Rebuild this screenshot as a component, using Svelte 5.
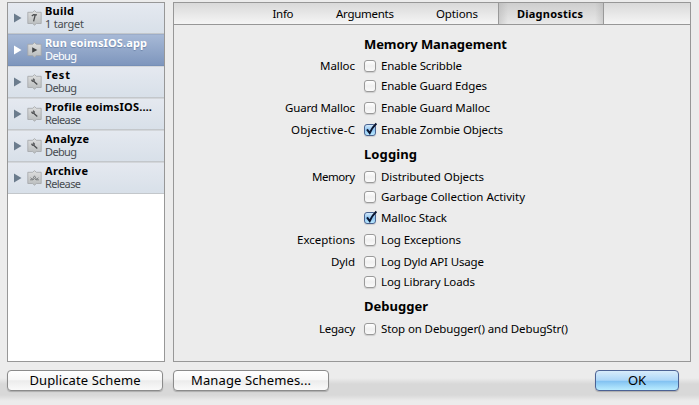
<script>
  const schemes = [
    { name: 'Build', detail: '1 target', icon: 'hammer', w: 29, dw: 39 },
    { name: 'Run eoimsIOS.app', detail: 'Debug', icon: 'play', w: 102, dw: 32, selected: true },
    { name: 'Test', detail: 'Debug', icon: 'wrench', w: 25, dw: 32 },
    { name: 'Profile eoimsIOS.…', detail: 'Release', icon: 'wrench', w: 107, dw: 36 },
    { name: 'Analyze', detail: 'Debug', icon: 'wrench', w: 44, dw: 32 },
    { name: 'Archive', detail: 'Release', icon: 'archive', w: 43, dw: 36 }
  ];
  const tabs = [
    { name: 'Info', w: 21, box: 74 },
    { name: 'Arguments', w: 58, box: 90 },
    { name: 'Options', w: 42, box: 94 },
    { name: 'Diagnostics', w: 66, box: 106, active: true }
  ];
  const groups = [
    { title: 'Memory Management', w: 143, rows: [
      { label: 'Malloc', lw: 35, text: 'Enable Scribble', w: 81, h: 20 },
      { text: 'Enable Guard Edges', w: 106, h: 22 },
      { label: 'Guard Malloc', lw: 70, text: 'Enable Guard Malloc', w: 109, h: 22 },
      { label: 'Objective-C', lw: 64, text: 'Enable Zombie Objects', w: 122, h: 22, on: true }
    ] },
    { title: 'Logging', w: 53, rows: [
      { label: 'Memory', lw: 43, text: 'Distributed Objects', w: 103, h: 20 },
      { text: 'Garbage Collection Activity', w: 144, h: 21 },
      { text: 'Malloc Stack', w: 66, h: 22, on: true },
      { label: 'Exceptions', lw: 58, text: 'Log Exceptions', w: 80, h: 22 },
      { label: 'Dyld', lw: 24, text: 'Log Dyld API Usage', w: 103, h: 20 },
      { text: 'Log Library Loads', w: 94, h: 22 }
    ] },
    { title: 'Debugger', w: 64, rows: [
      { label: 'Legacy', lw: 36, text: 'Stop on Debugger() and DebugStr()', w: 187, h: 20 }
    ] }
  ];

  // Tracks a label's letters so that the text spans the given width.
  function track(node, width) {
    const apply = () => {
      node.style.letterSpacing = '0px';
      const natural = node.getBoundingClientRect().width;
      const gap = (width - natural) / Math.max(1, node.textContent.length - 1);
      node.style.letterSpacing = `${gap}px`;
      node.style.marginRight = `${-gap}px`;
    };
    apply();
    document.fonts.ready.then(apply);
  }
</script>

<div class="sheet">
  <div class="content">
    <div class="sidebar">
      {#each schemes as s}
        <div class="scheme" class:selected={s.selected}>
          <svg class="arrow" width="8" height="10" viewBox="0 0 8 10"><path d="M0 .5 7.5 5 0 9.5Z" /></svg>
          <svg class="icon" width="15" height="16" viewBox="0 0 15 16">
            <defs>
              <linearGradient id="plate-{s.name.slice(0, 3)}" x2="0" y2="1"><stop stop-color="#dedfdf" /><stop offset="1" stop-color="#b9bcbd" /></linearGradient>
            </defs>
            <path class="plate" fill="url(#plate-{s.name.slice(0, 3)})" d="M.8 2.3H5.6L7.5.6l1.9 1.7h4.8v11.2H9.4l-1.9 1.7-1.9-1.7H.8Z" />
            {#if s.icon === 'hammer'}
              <path class="mark" d="M4.8 6 6.6 4.6l3.4.3M8.2 5 6.6 11.3" />
            {:else if s.icon === 'play'}
              <path class="solid" d="M5.2 5.2 10.3 8l-5.1 2.8Z" />
            {:else if s.icon === 'wrench'}
              <path class="mark" d="m6.4 7 3.9 3.6M4.6 5.6l.8 1.5 1.5.1.3-1.3-1-1.2" />
            {:else}
              <path class="fine" d="M3 9.8h2.2l2.3-4 2.3 4H12M3.6 7.6l1.8 2m6-2-1.8 2M5.7 10.2l1.8-1.7 1.8 1.7" />
            {/if}
          </svg>
          <div class="names">
            <div class="name"><span use:track={s.w}>{s.name}</span></div>
            <div class="detail"><span use:track={s.dw}>{s.detail}</span></div>
          </div>
        </div>
      {/each}
    </div>
    <div class="panel">
      <div class="tabs">
        {#each tabs as t}
          <div class="tab" class:active={t.active} style:width="{t.box}px"><span use:track={t.w}>{t.name}</span></div>
        {/each}
      </div>
      <div class="options">
        {#each groups as g}
          <div class="title"><span use:track={g.w}>{g.title}</span></div>
          {#each g.rows as r}
            <div class="row" style:height="{r.h}px">
              <div class="label">{#if r.label}<span use:track={r.lw}>{r.label}</span>{/if}</div>
              <div class="box" class:on={r.on}>
                {#if r.on}
                  <svg width="14" height="14" viewBox="0 0 14 14"><path d="m3 6.3 2.7 3.7Q8 4.5 12.4.4" /></svg>
                {/if}
              </div>
              <div class="text"><span use:track={r.w}>{r.text}</span></div>
            </div>
          {/each}
        {/each}
      </div>
    </div>
  </div>
  <div class="footer">
    <div class="button dup"><span use:track={111}>Duplicate Scheme</span></div>
    <div class="button manage"><span use:track={120}>Manage Schemes...</span></div>
    <div class="button ok"><span use:track={18}>OK</span></div>
  </div>
</div>

<style>
  .sheet {
    box-sizing: border-box;
    width: 699px;
    height: 405px;
    padding: 2px 8px 0 7px;
    overflow: hidden;
    background: linear-gradient(#ececec 378px, #d8d8d8 384px, #d8d8d8 395px, #ececec 401px);
    font: 11.5px/14px "Noto Sans", "Open Sans", sans-serif;
    color: #000;
  }
  span { display: inline-block; white-space: pre; }
  .content { display: flex; gap: 8px; height: 360px; }
  .sidebar {
    box-sizing: border-box;
    width: 158px;
    border: 1px solid #979797;
    background: #fff;
  }
  .scheme {
    box-sizing: border-box;
    display: flex;
    height: 32px;
    padding-left: 6px;
    background: linear-gradient(#e5e9f0, #d8e0e9);
    border-bottom: 1px solid #c3c7cb;
    box-shadow: inset 0 1px #d3d6da;
  }
  .scheme:first-child { height: 31px; box-shadow: none; }
  .scheme:first-child .names { padding-top: 1px; }
  .scheme:first-child .arrow { margin-top: 10px; }
  .scheme:first-child .icon { margin-top: 7px; }
  .selected {
    background: linear-gradient(#a8bad7, #7e96bd);
    border-bottom-color: #768fb6;
    box-shadow: inset 0 1px #9cadc9;
    color: #fff;
  }
  .arrow { flex: none; margin-top: 11px; fill: #6b7c8d; }
  .selected .arrow { fill: #fff; }
  .icon { flex: none; margin: 8px 3px 0 5px; }
  .plate { stroke: #a3a6a8; stroke-width: .8; stroke-linejoin: round; }
  .mark { fill: none; stroke: #4c4e50; stroke-width: 1.3; }
  .solid { fill: #424446; }
  .fine { fill: none; stroke: #6e7275; stroke-width: .8; }
  .names { padding-top: 2px; }
  .name { height: 13px; line-height: 13px; font-size: 11px; font-weight: 700; }
  .name span, .detail span { display: block; width: max-content; }
  .detail { height: 14px; line-height: 14px; font-size: 11px; color: #484c50; }
  .selected .detail { color: #fff; }
  .selected .name { text-shadow: 0 1px 1px #6c83a8; }
  .panel {
    box-sizing: border-box;
    width: 518px;
    border: 1px solid #979797;
    background: #ececec;
  }
  .tabs {
    box-sizing: border-box;
    display: flex;
    height: 22px;
    padding-left: 72px;
    border-bottom: 1px solid #979797;
    background: linear-gradient(#d9d9d9, #f5f5f5);
  }
  .tab { box-sizing: border-box; text-align: center; line-height: 21px; }
  .tab:nth-child(3) { margin-right: -6px; }
  .active {
    font-size: 11px;
    font-weight: 700;
    border: 1px solid #999;
    border-width: 0 1px;
    background: linear-gradient(90deg, #aaa6, #bbb0 9px, #bbb0 96px, #aaa6), linear-gradient(#cecece, #e9e9e9);
  }
  .active span { position: relative; left: -1px; }
  .options { padding-top: 8px; }
  .title { height: 23px; padding-left: 190px; line-height: 22px; font-size: 13px; font-weight: 700; }
  .row + .title { height: 25px; line-height: 24px; }
  .row { display: flex; }
  .label { width: 181px; text-align: right; line-height: 20px; }
  .text { line-height: 20px; margin-left: 5px; }
  .box {
    box-sizing: border-box;
    width: 12px;
    height: 12px;
    margin: 4px 0 0 9px;
    border: 1px solid #9a9a9a;
    border-radius: 3px;
    background: linear-gradient(#fff, #f0f0f0 50%, #fafafa);
    box-shadow: 0 1px 1px #0002;
  }
  .box.on { border-color: #4a6390; background: linear-gradient(#d3e9fb, #8fc5f1 50%, #b9e8ff); }
  .box svg { display: block; margin: -2px 0 0 -1px; overflow: visible; }
  .box path { fill: none; stroke: #0a1530; stroke-width: 2; }
  .footer { display: flex; padding-top: 8px; }
  .button {
    box-sizing: border-box;
    height: 21px;
    border: 1px solid #8b8b8b;
    border-radius: 4px;
    background: linear-gradient(#fff, #f7f7f7 45%, #ececec 52%, #fafafa);
    box-shadow: 0 1px 1px #0003;
    text-align: center;
    font-size: 13px;
    line-height: 19px;
  }
  .dup { width: 156px; }
  .manage { width: 156px; margin-left: 10px; }
  .ok {
    width: 84px;
    margin-left: 266px;
    border-color: #4c6294;
    background: linear-gradient(#d8ecfb, #aed7f8 48%, #84c3f2 55%, #b9ecff);
  }
</style>
